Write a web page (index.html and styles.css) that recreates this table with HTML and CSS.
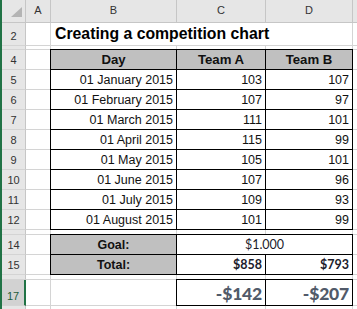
FILE: index.html
```html
<!DOCTYPE html>
<html lang="en">
<head>
  <meta charset="UTF-8">
  <title>Creating a competition chart</title>
  <link rel="stylesheet" href="styles.css">
</head>
<body>
<div class="sheet">
  <!-- column headers -->
  <div class="corner"><span class="tri"></span></div>
  <div class="ch">A</div>
  <div class="ch">B</div>
  <div class="ch">C</div>
  <div class="ch">D</div>
  <div class="ch"></div>

  <!-- row 2: title -->
  <div class="rh">2</div>
  <div class="c"></div>
  <div class="c title span3">Creating a competition chart</div>
  <div class="c"></div>

  <!-- row 3 -->
  <div class="rh"></div>
  <div class="c"></div><div class="c"></div><div class="c"></div><div class="c"></div><div class="c"></div>

  <!-- row 4: table head -->
  <div class="rh">4</div>
  <div class="c"></div>
  <div class="c hd big mid k kl kt">Day</div>
  <div class="c hd big mid k kt">Team A</div>
  <div class="c hd big mid k kt">Team B</div>
  <div class="c"></div>

  <div class="rh">5</div>
  <div class="c"></div>
  <div class="c num k kl">01 January 2015</div>
  <div class="c num k">103</div>
  <div class="c num k">107</div>
  <div class="c"></div>

  <div class="rh">6</div>
  <div class="c"></div>
  <div class="c num k kl">01 February 2015</div>
  <div class="c num k">107</div>
  <div class="c num k">97</div>
  <div class="c"></div>

  <div class="rh">7</div>
  <div class="c"></div>
  <div class="c num k kl">01 March 2015</div>
  <div class="c num k">111</div>
  <div class="c num k">101</div>
  <div class="c"></div>

  <div class="rh">8</div>
  <div class="c"></div>
  <div class="c num k kl">01 April 2015</div>
  <div class="c num k">115</div>
  <div class="c num k">99</div>
  <div class="c"></div>

  <div class="rh">9</div>
  <div class="c"></div>
  <div class="c num k kl">01 May 2015</div>
  <div class="c num k">105</div>
  <div class="c num k">101</div>
  <div class="c"></div>

  <div class="rh">10</div>
  <div class="c"></div>
  <div class="c num k kl">01 June 2015</div>
  <div class="c num k">107</div>
  <div class="c num k">96</div>
  <div class="c"></div>

  <div class="rh">11</div>
  <div class="c"></div>
  <div class="c num k kl">01 July 2015</div>
  <div class="c num k">109</div>
  <div class="c num k">93</div>
  <div class="c"></div>

  <div class="rh">12</div>
  <div class="c"></div>
  <div class="c num k kl">01 August 2015</div>
  <div class="c num k">101</div>
  <div class="c num k">99</div>
  <div class="c"></div>

  <!-- row 13 -->
  <div class="rh"></div>
  <div class="c"></div><div class="c"></div><div class="c"></div><div class="c"></div><div class="c"></div>

  <!-- rows 14-15: goal and totals -->
  <div class="rh">14</div>
  <div class="c"></div>
  <div class="c hd mid k kl kt">Goal:</div>
  <div class="c money mid k kt span2">$1.000</div>
  <div class="c"></div>

  <div class="rh">15</div>
  <div class="c"></div>
  <div class="c hd mid k kl">Total:</div>
  <div class="c money bold num k">$858</div>
  <div class="c money bold num k">$793</div>
  <div class="c"></div>

  <!-- row 16 -->
  <div class="rh"></div>
  <div class="c"></div><div class="c"></div><div class="c"></div><div class="c"></div><div class="c"></div>

  <!-- row 17: difference to goal -->
  <div class="rh sel">17</div>
  <div class="c"></div>
  <div class="c"></div>
  <div class="c diff num k kl kt">-$142</div>
  <div class="c diff num k kt">-$207</div>
  <div class="c"></div>

  <!-- row 18 -->
  <div class="rh"></div>
  <div class="c"></div><div class="c"></div><div class="c"></div><div class="c"></div><div class="c"></div>
</div>
</body>
</html>
```

FILE: styles.css
```css
html, body {
  margin: 0;
  height: 100%;
  background: #fff;
}

.sheet {
  height: 100%;
  box-sizing: border-box;
  border-left: 2px solid #217346;
  display: grid;
  grid-template-columns: 24px 25px 126px 89px 87px 1fr;
  grid-template-rows: 23px 23px 4px repeat(9, 20px) 5px 20px 20px 5px 26px 1fr;
  font-family: "Liberation Sans", Arial, sans-serif;
  font-size: 12.5px;
  color: #111;
}

/* headers */
.corner, .ch, .rh {
  box-sizing: border-box;
  background: #e6e6e6;
  border-right: 1px solid #c6c6c6;
  border-bottom: 1px solid #c6c6c6;
  color: #333;
  font-size: 11px;
  display: flex;
  justify-content: center;
}

.corner {
  justify-content: flex-end;
  align-items: flex-end;
  padding: 0 3px 5px 0;
}

.tri {
  width: 0;
  height: 0;
  border-left: 11px solid transparent;
  border-bottom: 10px solid #b4b4b4;
}

.ch {
  align-items: center;
  padding-bottom: 2px;
}

.rh {
  align-items: flex-end;
  padding-bottom: 3px;
  border-bottom-color: #d4d4d4;
}

.rh.sel {
  background: #d2d2d2;
  color: #1e5c3a;
  border-right: 2px solid #217346;
}

/* cells */
.c {
  box-sizing: border-box;
  background: #fff;
  border-right: 1px solid #d4d4d4;
  border-bottom: 1px solid #d4d4d4;
  padding: 0 3px 2px;
  line-height: 14px;
  display: flex;
  align-items: flex-end;
  white-space: nowrap;
  overflow: hidden;
}

.span2 { grid-column: span 2; }
.span3 { grid-column: span 3; }

.title {
  font-size: 15.8px;
  font-weight: bold;
  line-height: 18px;
  color: #000;
  padding-left: 4px;
}

.num { justify-content: flex-end; }
.mid { justify-content: center; }

.hd {
  background: #c0c0c0;
  font-weight: bold;
}

.big { font-size: 13.2px; }

/* black borders over the gridlines */
.k { border-right-color: #000; border-bottom-color: #000; }
.kl { box-shadow: -1px 0 0 #000; }
.kt { box-shadow: 0 -1px 0 #000; }
.kl.kt { box-shadow: -1px 0 0 #000, 0 -1px 0 #000, -1px -1px 0 #000; }

.money {
  font-family: Lato, "Open Sans", sans-serif;
  font-size: 12.5px;
  color: #1c1c2c;
}

.bold { font-weight: bold; font-size: 12.5px; }

.diff {
  font-family: Lato, "Open Sans", sans-serif;
  font-weight: 900;
  font-size: 17.5px;
  line-height: 20px;
  letter-spacing: -0.2px;
  color: #515a69;
  padding-bottom: 1px;
}
```
